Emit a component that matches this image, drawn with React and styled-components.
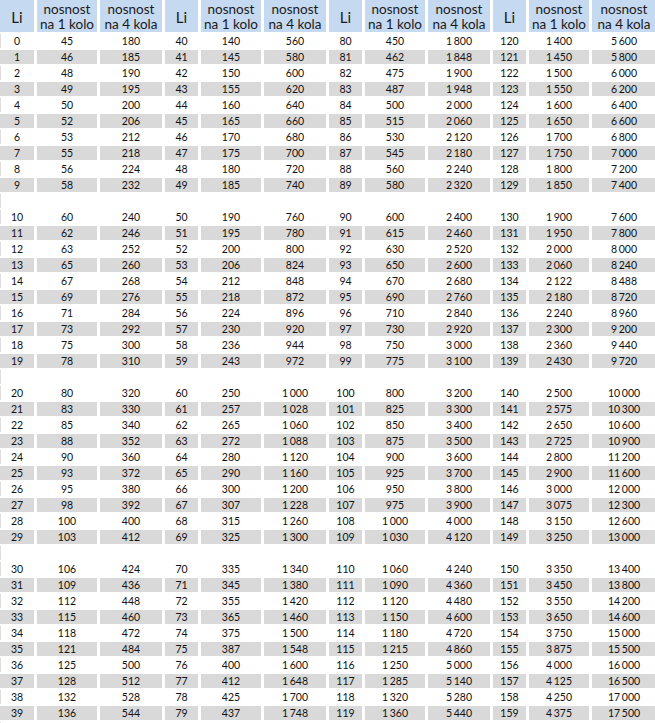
import React from 'react';
import styled, { createGlobalStyle } from 'styled-components';

const Global = createGlobalStyle`
  html, body {
    margin: 0;
    padding: 0;
    background: #fff;
    overflow: hidden;
  }
  body {
    font-family: 'Lato', 'Open Sans', sans-serif;
    color: #111;
  }
`;

// nosnost na 1 kolo, Li 0..159
const ONE = [
  45, 46, 48, 49, 50, 52, 53, 55, 56, 58,
  60, 62, 63, 65, 67, 69, 71, 73, 75, 78,
  80, 83, 85, 88, 90, 93, 95, 98, 100, 103,
  106, 109, 112, 115, 118, 121, 125, 128, 132, 136,
  140, 145, 150, 155, 160, 165, 170, 175, 180, 185,
  190, 195, 200, 206, 212, 218, 224, 230, 236, 243,
  250, 257, 265, 272, 280, 290, 300, 307, 315, 325,
  335, 345, 355, 365, 375, 387, 400, 412, 425, 437,
  450, 462, 475, 487, 500, 515, 530, 545, 560, 580,
  600, 615, 630, 650, 670, 690, 710, 730, 750, 775,
  800, 825, 850, 875, 900, 925, 950, 975, 1000, 1030,
  1060, 1090, 1120, 1150, 1180, 1215, 1250, 1285, 1320, 1360,
  1400, 1450, 1500, 1550, 1600, 1650, 1700, 1750, 1800, 1850,
  1900, 1950, 2000, 2060, 2122, 2180, 2240, 2300, 2360, 2430,
  2500, 2575, 2650, 2725, 2800, 2900, 3000, 3075, 3150, 3250,
  3350, 3450, 3550, 3650, 3750, 3875, 4000, 4125, 4250, 4375,
];

// nosnost na 4 kola
const FOUR = [
  180, 185, 190, 195, 200, 206, 212, 218, 224, 232,
  240, 246, 252, 260, 268, 276, 284, 292, 300, 310,
  320, 330, 340, 352, 360, 372, 380, 392, 400, 412,
  424, 436, 448, 460, 472, 484, 500, 512, 528, 544,
  560, 580, 600, 620, 640, 660, 680, 700, 720, 740,
  760, 780, 800, 824, 848, 872, 896, 920, 944, 972,
  1000, 1028, 1060, 1088, 1120, 1160, 1200, 1228, 1260, 1300,
  1340, 1380, 1420, 1460, 1500, 1548, 1600, 1648, 1700, 1748,
  1800, 1848, 1900, 1948, 2000, 2060, 2120, 2180, 2240, 2320,
  2400, 2460, 2520, 2600, 2680, 2760, 2840, 2920, 3000, 3100,
  3200, 3300, 3400, 3500, 3600, 3700, 3800, 3900, 4000, 4120,
  4240, 4360, 4480, 4600, 4720, 4860, 5000, 5140, 5280, 5440,
  5600, 5800, 6000, 6200, 6400, 6600, 6800, 7000, 7200, 7400,
  7600, 7800, 8000, 8240, 8488, 8720, 8960, 9200, 9440, 9720,
  10000, 10300, 10600, 10900, 11200, 11600, 12000, 12300, 12600, 13000,
  13400, 13800, 14200, 14600, 15000, 15500, 16000, 16500, 17000, 17500,
];

const fmt = n => String(n).replace(/\B(?=(\d{3})+(?!\d))/g, ' ');

// 34+60+62 + 3*(33+60+62) + 2 extra on last column + 13 spacings of 3px
const Table = styled.table`
  border-collapse: separate;
  border-spacing: 3px 2px;
  table-layout: fixed;
  width: 662px;
  min-width: 662px;
  margin: -2px 0 0 -3px;
`;

const Col = styled.col`
  width: ${p => p.$w}px;
`;

const Head = styled.th`
  height: 32px;
  padding: 0;
  background: #c5d9f1;
  font-weight: 400;
  text-align: center;
  vertical-align: middle;
  color: #1a1a1a;
  font-size: ${p => (p.$big ? 15 : 13.5)}px;
  line-height: 15px;
  padding-top: ${p => (p.$big ? 3 : 1)}px;
  box-sizing: border-box;
  white-space: nowrap;
`;

const Cell = styled.td`
  height: 14px;
  padding: 0;
  padding-top: 1px;
  box-sizing: border-box;
  font-size: 10.5px;
  line-height: 13px;
  text-align: center;
  white-space: nowrap;
  word-spacing: -1px;
  background: ${p => (p.$grey ? '#d9d9d9' : '#fff')};
  box-shadow: ${p => (p.$edge ? 'inset 1px 0 0 #dcdcdc' : 'none')};
`;

const GROUPS = [0, 1, 2, 3];

const HeaderRow = () => (
  <tr>
    {GROUPS.map(g => (
      <React.Fragment key={g}>
        <Head $big>Li</Head>
        <Head>nosnost<br />na 1 kolo</Head>
        <Head>nosnost<br />na 4 kola</Head>
      </React.Fragment>
    ))}
  </tr>
);

const DataRow = ({ index }) => {
  const grey = index % 2 === 1;
  return (
    <tr>
      {GROUPS.map(g => {
        const li = g * 40 + index;
        return (
          <React.Fragment key={g}>
            <Cell $grey={grey} $edge={g === 0 && !grey}>{li}</Cell>
            <Cell $grey={grey}>{fmt(ONE[li])}</Cell>
            <Cell $grey={grey}>{fmt(FOUR[li])}</Cell>
          </React.Fragment>
        );
      })}
    </tr>
  );
};

const SpacerRow = () => (
  <tr>
    {GROUPS.map(g => (
      <React.Fragment key={g}>
        <Cell $edge={g === 0} />
        <Cell />
        <Cell />
      </React.Fragment>
    ))}
  </tr>
);

export default function App() {
  const blocks = [0, 1, 2, 3];
  return (
    <>
      <Global />
      <Table>
        <colgroup>
          {GROUPS.map(g => (
            <React.Fragment key={g}>
              <Col $w={g === 0 ? 34 : 33} />
              <Col $w={60} />
              <Col $w={g === 3 ? 64 : 62} />
            </React.Fragment>
          ))}
        </colgroup>
        <thead>
          <HeaderRow />
        </thead>
        <tbody>
          {blocks.map(b => (
            <React.Fragment key={b}>
              {Array.from({ length: 10 }, (_, r) => (
                <DataRow key={r} index={b * 10 + r} />
              ))}
              <SpacerRow />
            </React.Fragment>
          ))}
        </tbody>
      </Table>
    </>
  );
}
